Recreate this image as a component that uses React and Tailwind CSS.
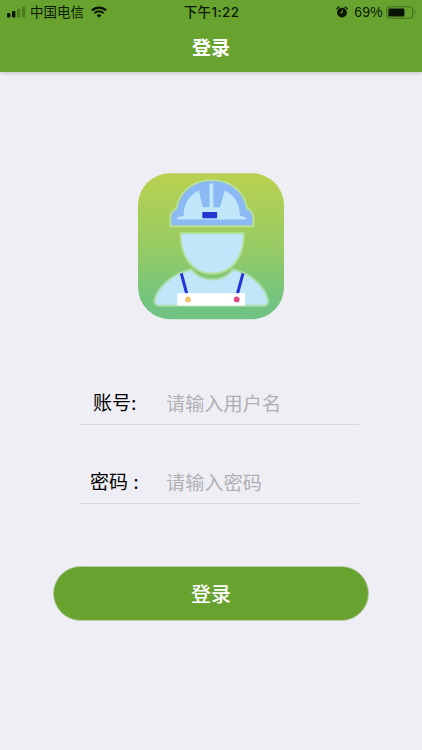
import { useState } from 'react';

function StatusBar() {
  return (
    <div className="flex h-6 items-center justify-between pl-[7px] pr-[6px] text-[13.5px] text-[#0c1a04]">
      <div className="flex w-[150px] items-center">
        <svg className="h-3 w-[19px]" viewBox="0 0 19 12">
          <rect x="0" y="7" width="3.4" height="4.5" rx="1" fill="#0a1404" />
          <rect x="5" y="5" width="3.4" height="6.5" rx="1" fill="#0a1404" />
          <rect x="10" y="2.8" width="3.4" height="8.7" rx="1" fill="#4c7c20" />
          <rect x="15" y="0.5" width="3.4" height="11" rx="1" fill="#4c7c20" />
        </svg>
        <span className="ml-1">中国电信</span>
        <svg className="ml-[7px] h-3 w-4" viewBox="0 0 16 12">
          <path d="M1 4.4a10 10 0 0 1 14 0" fill="none" stroke="#0a1404" strokeWidth="2.3" />
          <path d="M3.5 7.2a6.4 6.4 0 0 1 9 0" fill="none" stroke="#0a1404" strokeWidth="2" />
          <path d="M5.6 9.3a3.5 3.5 0 0 1 4.8 0L8 11.7z" fill="#0a1404" />
        </svg>
      </div>
      <span className="font-medium tracking-[0.4px]">下午1:22</span>
      <div className="flex w-[150px] items-center justify-end">
        <svg className="h-3 w-3" viewBox="0 0 12 12">
          <circle cx="6" cy="6.6" r="4.9" fill="#0a1404" />
          <path d="M0.8 2.8 2.9 1M11.2 2.8 9.1 1" stroke="#0a1404" strokeWidth="1.3" strokeLinecap="round" />
          <path d="M6.2 3.8v3H4" fill="none" stroke="#68a22f" strokeWidth="1" />
        </svg>
        <span className="ml-[6px] font-['Liberation_Sans',sans-serif] text-[14px] tracking-[0.2px]">69%</span>
        <svg className="ml-[3px] h-[13px] w-[30px]" viewBox="0 0 30 13">
          <rect x="0.7" y="0.7" width="26" height="11.6" rx="3" fill="none" stroke="#44711c" strokeWidth="1.1" />
          <rect x="2.4" y="2.4" width="16" height="8.2" rx="1" fill="#0a1404" />
          <path d="M28.2 4.6c1.6.6 1.6 3.2 0 3.8z" fill="#44711c" />
        </svg>
      </div>
    </div>
  );
}

function Logo() {
  return (
    <svg className="mx-auto block h-[147px] w-[147px]" viewBox="0 0 147 147">
      <defs>
        <linearGradient id="fondo" x1="0" y1="0" x2="0" y2="1">
          <stop offset="0" stopColor="#b9d150" />
          <stop offset="0.5" stopColor="#98cb63" />
          <stop offset="0.85" stopColor="#75c47d" />
          <stop offset="1" stopColor="#70c284" />
        </linearGradient>
      </defs>
      <rect x="0" y="0.2" width="146" height="146" rx="32" fill="url(#fondo)" />

      {/* helmet */}
      <path
        d="M32.4 53.2V44.5Q32.6 38.4 38.6 35.2C41 18 56 7 73.8 7S106.5 18 109 35.2Q115.2 38.4 115.4 44.5V53.2Z"
        fill="#8bb9f3"
        stroke="#b9df90"
        strokeWidth="2"
        strokeLinejoin="round"
      />
      <path
        d="M38.5 46.5Q39.5 43.6 45.6 43.1C45.7 31 51 22.5 60.8 17.6L64.8 34.2H71.5V10.5H75.3V34.2H82L86.8 17.6C96.5 22.5 101.8 31 102 43.1Q108 43.6 108.8 46.5Z"
        fill="#c1e6fa"
      />
      <rect x="64.3" y="39" width="14.8" height="6.2" rx="0.8" fill="#2735d5" />

      {/* face */}
      <path
        d="M42.7 60.2H105.8C106.2 83 94.5 100.6 74.2 100.6S42.3 83 42.7 60.2Z"
        fill="#c1e6fa"
        stroke="#b4e0a0"
        strokeWidth="2"
        strokeLinejoin="round"
      />

      {/* body */}
      <path
        d="M53.5 96.5C59 103.5 66 106.6 74.2 106.6S89.5 103.5 95 96.5C113 100 127 113.5 130 127Q130.6 132.8 125.5 132.8H21.5Q16 132.8 16.5 127C19.5 113.5 35.5 100 53.5 96.5Z"
        fill="#c1e6fa"
        stroke="#aadea8"
        strokeWidth="2"
        strokeLinejoin="round"
      />
      <path d="M43.3 100.4 48.8 121M105 100.4 99.4 121" stroke="#2735d5" strokeWidth="3" />
      <rect x="39.3" y="120.2" width="67.8" height="12.4" fill="#fff" />
      <circle cx="50" cy="126.4" r="2.9" fill="#f2c368" />
      <circle cx="98.7" cy="126.4" r="2.9" fill="#e04a82" />
    </svg>
  );
}

function App() {
  const [usuario, setUsuario] = useState('');
  const [clave, setClave] = useState('');

  return (
    <div className="flex h-[750px] w-full flex-col bg-[#efeef4] font-['Inter','Noto_Sans_CJK_SC',sans-serif]">
      <header className="h-[72px] bg-[#68a22f] shadow-[0_1px_4px_rgba(0,0,0,0.2)]">
        <StatusBar />
        <h1 className="pt-2.5 text-center text-[19px] leading-[30px] font-bold text-white">登录</h1>
      </header>

      <main className="pt-[101px]">
        <Logo />

        <form className="mt-[60px]" onSubmit={(e) => e.preventDefault()}>
          <div className="ml-20 flex h-[45px] w-[279px] items-center border-b border-[#d9d8de] pt-1">
            <label htmlFor="usuario" className="w-[86px] pl-[13px] text-[19px] text-black">账号:</label>
            <input
              id="usuario"
              value={usuario}
              onChange={(e) => setUsuario(e.target.value)}
              placeholder="请输入用户名"
              className="w-[180px] bg-transparent text-[19.2px] outline-none placeholder:text-[#b0afb5]"
            />
          </div>
          <div className="ml-20 mt-[33px] flex h-[46px] w-[279px] items-center border-b border-[#d9d8de] pt-1.5">
            <label htmlFor="clave" className="w-[86px] pl-2.5 text-[19px] text-black">密码 :</label>
            <input
              id="clave"
              type="password"
              value={clave}
              onChange={(e) => setClave(e.target.value)}
              placeholder="请输入密码"
              className="w-[180px] bg-transparent text-[19.2px] outline-none placeholder:text-[#b0afb5]"
            />
          </div>
          <button
            type="submit"
            className="mx-auto mt-[62px] block h-[55px] w-[316px] rounded-full border border-[#b9c9ac] bg-[#68a22f] pt-0.5 text-[20px] font-medium text-white"
          >
            登录
          </button>
        </form>
      </main>
    </div>
  );
}

export default App;
